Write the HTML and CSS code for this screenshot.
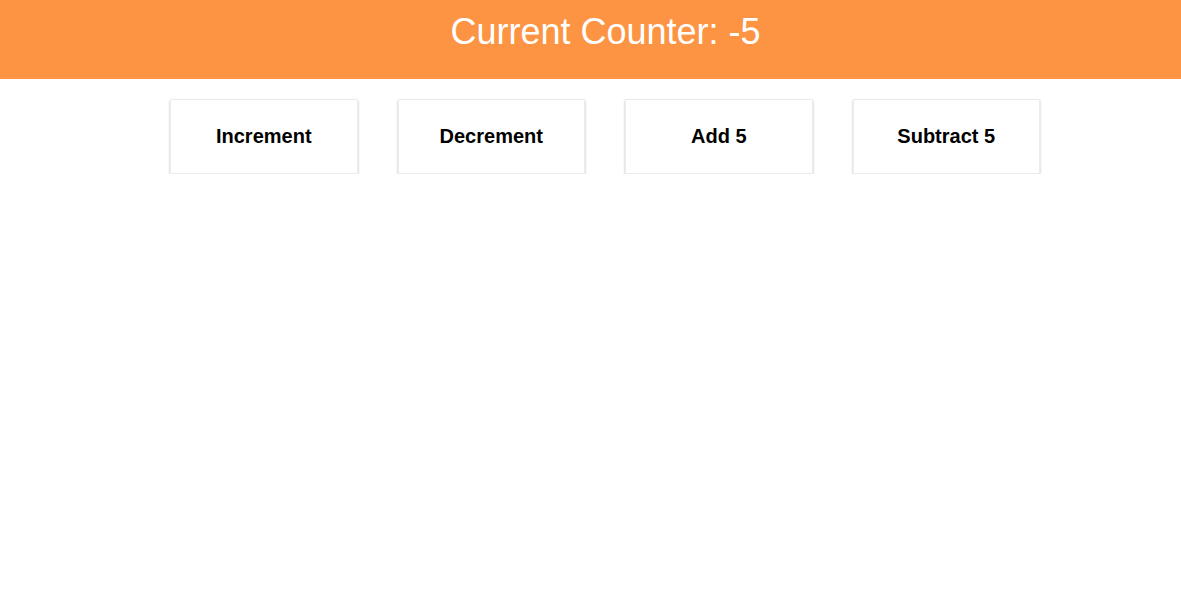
FILE: index.html
```html
<!DOCTYPE html>
<html>
<head>
<meta charset="utf-8">
<link rel="stylesheet" href="styles.css">
</head>
<body>
<header class="bar">
  <h1 class="title">Current Counter: -5</h1>
</header>
<div class="controls">
  <button class="btn">Increment</button>
  <button class="btn">Decrement</button>
  <button class="btn">Add 5</button>
  <button class="btn">Subtract 5</button>
</div>
</body>
</html>
```

FILE: styles.css
```css
html, body {
  margin: 0;
  padding: 0;
  background: #fff;
  font-family: "Liberation Sans", Arial, sans-serif;
}
.bar {
  background: #fd9443;
  height: 79px;
  display: flex;
  justify-content: center;
  padding-left: 30px;
}
.title {
  margin: 0;
  padding-top: 10px;
  color: #fff;
  font-weight: normal;
  font-size: 36px;
  line-height: 44px;
}
.controls {
  display: flex;
  justify-content: center;
  gap: 40px;
  padding: 20px 0 0 29px;
}
.btn {
  width: 187.5px;
  height: 75px;
  background: #fff;
  border: 1px solid #ececec;
  box-shadow: 0 2px 2px rgba(0,0,0,0.2), 0 1px 3px rgba(0,0,0,0.07);
  font-family: "Liberation Sans", Arial, sans-serif;
  font-size: 20px;
  font-weight: bold;
  color: #000;
  padding: 0 0 1px;
}
```
